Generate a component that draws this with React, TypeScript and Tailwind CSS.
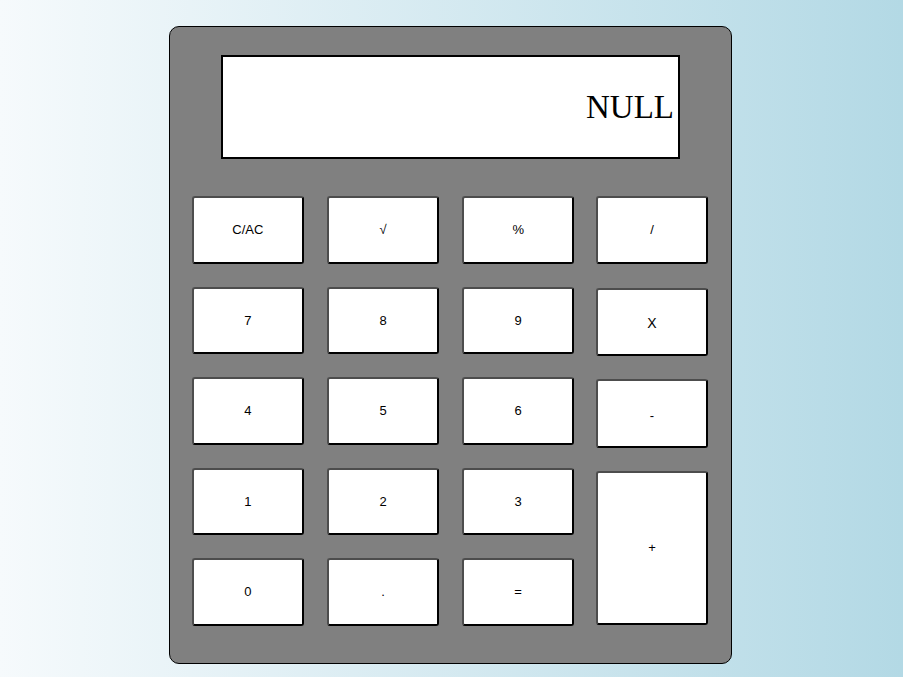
import React from "react";

const btn =
  "flex items-center justify-center bg-white rounded-[3px] border-2 border-t-[#4d4d4d] border-l-[#4d4d4d] border-b-black border-r-black text-[13px] text-black";

export default function App() {
  const left = ["C/AC", "√", "%", "7", "8", "9", "4", "5", "6", "1", "2", "3", "0", ".", "="];
  return (
    <div
      className="w-[903px] h-[677px] bg-gradient-to-r from-[#f6fafc] to-[#b3d9e5] pt-[26px]"
      style={{ fontFamily: '"Liberation Sans", Arial, sans-serif' }}
    >
      <div className="ml-[169px] w-[563px] h-[638px] bg-[#808080] border border-black rounded-[10px] pt-[28px] px-[22px]">
        <div className="mx-auto w-[459px] h-[104px] bg-white border-2 border-black flex items-center justify-end pr-[4px]">
          <span
            className="text-[33px] leading-none text-black"
            style={{ fontFamily: '"Liberation Serif", "Times New Roman", serif' }}
          >
            NULL
          </span>
        </div>
        <div className="mt-[37px] flex gap-[22px]">
          <div className="grid grid-cols-3 grid-rows-[67.5px_67.5px_67.5px_67.5px_67.5px] gap-x-[23.5px] gap-y-[23px] w-[382px]">
            {left.map((k) => (
              <div key={k} className={btn}>
                {k}
              </div>
            ))}
          </div>
          <div className="flex flex-col w-[112px]">
            <div className={btn + " h-[68px]"}>/</div>
            <div className={btn + " h-[68px] mt-[24px] !text-[14px] pt-[2px]"}>X</div>
            <div className={btn + " h-[69px] mt-[23px] pt-[4px]"}>-</div>
            <div className={btn + " h-[154px] mt-[23px]"}>+</div>
          </div>
        </div>
      </div>
    </div>
  );
}
